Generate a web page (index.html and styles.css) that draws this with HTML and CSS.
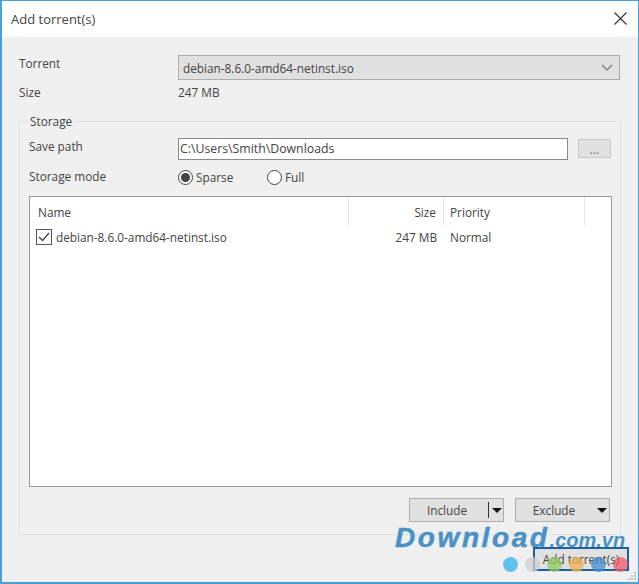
FILE: index.html
```html
<!DOCTYPE html>
<html lang="en">
<head>
<meta charset="utf-8">
<title>Add torrent(s)</title>
<link rel="stylesheet" href="styles.css">
</head>
<body>
<div class="window">
  <header class="titlebar">
    <span class="title">Add torrent(s)</span>
    <svg class="close" width="13" height="13" viewBox="0 0 13 13"><path d="M.5.5l12 12M12.500.5l-12 12" stroke="#333" stroke-width="1.100" fill="none"/></svg>
  </header>
  <main class="content">
    <div class="row row-torrent">
      <span class="label label-top">Torrent</span>
      <div class="combo">
        <span>debian-8.6.0-amd64-netinst.iso</span>
        <svg width="12" height="7" viewBox="0 0 12 7"><path d="M1 1l5 5 5-5" stroke="#777" stroke-width="1.200" fill="none"/></svg>
      </div>
    </div>
    <div class="row row-size">
      <span class="label">Size</span>
      <span>247 MB</span>
    </div>
    <fieldset class="group">
      <legend>Storage</legend>
      <div class="row row-path">
        <span class="label-inner label-top">Save path</span>
        <div class="input">C:\Users\Smith\Downloads</div>
        <div class="browse">...</div>
      </div>
      <div class="row row-mode">
        <span class="label-inner">Storage mode</span>
        <span class="radio radio-on"></span><span class="radio-text">Sparse</span>
        <span class="radio"></span><span class="radio-text">Full</span>
      </div>
      <div class="list">
        <div class="list-head">
          <span class="col-name">Name</span>
          <span class="col-size">Size</span>
          <span class="col-prio">Priority</span>
          <span class="col-rest"></span>
        </div>
        <div class="list-row">
          <span class="col-name cell-name">
            <svg width="16" height="16" viewBox="0 0 16 16"><rect x=".5" y=".5" width="15" height="15" fill="#fff" stroke="#555"/><path d="M3 8l3.500 3.500L13 4" stroke="#444" stroke-width="1.300" fill="none"/></svg>
            debian-8.6.0-amd64-netinst.iso
          </span>
          <span class="col-size cell">247 MB</span>
          <span class="col-prio cell">Normal</span>
        </div>
      </div>
      <div class="actions">
        <div class="btn btn-include"><span class="btn-text">Include</span><span class="sep"></span><span class="arrow"></span></div>
        <div class="btn btn-exclude"><span class="btn-text">Exclude</span><span class="arrow"></span></div>
      </div>
    </fieldset>
    <div class="footer">
      <div class="btn-add">Add torrent(s)</div>
    </div>
  </main>
  <div class="watermark">
    <div class="wm-text"><span class="wm-big">Download</span><span class="wm-small">.com.vn</span></div>
    <div class="dots">
      <span class="dot dot-sky"></span><span class="dot dot-gray"></span><span class="dot dot-green"></span><span class="dot dot-orange"></span><span class="dot dot-blue"></span><span class="dot dot-red"></span>
    </div>
  </div>
  <svg class="grip" width="10" height="10" viewBox="0 0 10 10"><path d="M7 1h2v2H7zM4 4h2v2H4zM7 4h2v2H7zM1 7h2v2H1zM4 7h2v2H4zM7 7h2v2H7z" fill="#c4c4c4"/></svg>
</div>
</body>
</html>
```
FILE: styles.css
```css
* { box-sizing: border-box; }
html, body { margin: 0; padding: 0; }
body {
  width: 639px;
  height: 584px;
  overflow: hidden;
  font-family: "Open Sans", "Noto Sans", sans-serif;
  font-size: 11.8px;
  color: #444;
}
.window {
  position: relative;
  width: 639px;
  height: 584px;
  border: 2px solid #4a9fd8;
  border-bottom-width: 2px;
  border-top-width: 1px;
  border-right-width: 1px;
  display: flex;
  flex-direction: column;
  background: #f0f0f0;
}
.titlebar {
  height: 36px;
  flex: none;
  background: #fff;
  display: flex;
  align-items: center;
  justify-content: space-between;
  padding: 0 11px 0 9px;
}
.title { font-size: 13px; color: #444; }
.close { margin-top: -1px; }
.content {
  flex: 1;
  display: flex;
  flex-direction: column;
  padding: 18px 18px 0 17px;
}
.row { display: flex; align-items: center; }
.label { width: 159px; flex: none; }
.label-top { align-self: flex-start; }
.row-torrent { height: 25px; }
.combo {
  flex: 1;
  height: 25px;
  display: flex;
  align-items: center;
  justify-content: space-between;
  padding: 0 4px;
  background: #e1e1e1;
  border: 1px solid #adadad;
}
.combo svg { margin-right: 2px; }
.row-size { height: 24px; }
.group {
  margin: 9px 0 0;
  padding: 0 7px 0 9px;
  width: 602px;
  height: 422px;
  border: 1px solid #e2e2e2;
  min-width: 0;
}
.group legend {
  padding: 0 2px;
  margin-left: -1px;
  line-height: 17px;
}
.label-inner { width: 149px; flex: none; }
.row-path { height: 25px; margin-top: 6px; gap: 0; }
.row-path .label-top { margin-top: 2px; }
.input {
  width: 390px;
  height: 22px;
  background: #fff;
  border: 1px solid #8a8a8a;
  padding: 0 1px;
  line-height: 20px;
  font-size: 12.300px;
}
.browse {
  margin-left: 10px;
  width: 33px;
  height: 19px;
  background: #e1e1e1;
  border: 1px solid #c8c8c8;
  color: #777;
  text-align: center;
  line-height: 18px;
}
.row-mode { height: 26px; margin-top: 3px; }
.row-mode .label-inner { margin-top: -2px; }
.radio {
  width: 15px;
  height: 15px;
  border: 1px solid #444;
  border-radius: 50%;
  background: #fff;
  flex: none;
  display: flex;
  align-items: center;
  justify-content: center;
}
.radio-on::after {
  content: "";
  width: 9px;
  height: 9px;
  border-radius: 50%;
  background: #444;
}
.radio-text { margin-left: 3px; width: 71px; }
.radio-text:last-child { width: auto; }
.list {
  margin-top: 6px;
  height: 291px;
  width: 583px;
  background: #fff;
  border: 1px solid #9a9a9a;
  flex: none;
}
.list-head { display: flex; height: 28px; align-items: center; }
.list-head span {
  height: 100%;
  display: flex;
  align-items: center;
  padding-top: 2px;
  border-right: 1px solid #e6e6e6;
}
.col-name { width: 319px; padding-left: 8px; }
.col-size { width: 95px; justify-content: flex-end; padding-right: 7px; display: flex; }
.col-prio { width: 141px; padding-left: 6px; }
.col-rest { flex: 1; border-right: 0 !important; }
.list-row { display: flex; height: 24px; align-items: center; }
.cell-name { display: flex; align-items: center; padding-left: 6px; gap: 4px; }
.actions {
  display: flex;
  gap: 11px;
  justify-content: flex-end;
  padding-right: 3px;
  margin-top: 11px;
}
.btn {
  width: 95px;
  height: 24px;
  background: #e1e1e1;
  border: 1px solid #adadad;
  display: flex;
  align-items: center;
}
.btn-text { flex: 1; text-align: center; padding-right: 4px; }
.btn-exclude .btn-text { padding-right: 5px; }
.sep { width: 1px; height: 16px; background: #333; margin-right: 3px; }
.arrow {
  width: 0;
  height: 0;
  border-left: 5px solid transparent;
  border-right: 5px solid transparent;
  border-top: 5px solid #111;
  margin-right: 1px;
}
.btn-exclude .arrow { margin-right: 2px; }
.footer {
  display: flex;
  justify-content: flex-end;
  margin-top: 12px;
  margin-right: -9px;
}
.btn-add {
  width: 96px;
  height: 24px;
  background: #e1e1e1;
  border: 2px solid #1f5f9e;
  text-align: center;
  line-height: 20px;
}
.watermark {
  position: absolute;
  left: 393px;
  top: 527px;
  width: 240px;
  height: 50px;
  pointer-events: none;
}
.wm-text {
  display: flex;
  align-items: baseline;
  font-family: "Liberation Sans", sans-serif;
  font-weight: bold;
  font-style: italic;
  color: #4a92c6;
  line-height: 20px;
}
.wm-big { font-size: 28px; letter-spacing: 2.600px; -webkit-text-stroke: .5px #4a92c6; }
.wm-small { font-size: 20px; }
.dots {
  position: absolute;
  left: 108px;
  top: 29px;
  display: flex;
  gap: 7px;
}
.dot { width: 15px; height: 15px; border-radius: 50%; opacity: .75; }
.dot-sky { background: #4fbdec; opacity: .9; }
.dot-gray { background: #cfcfcf; }
.dot-green { background: #8ccb5e; }
.dot-orange { background: #f2b04c; }
.dot-blue { background: #3f8fd0; }
.dot-red { background: #ee5a6a; }
.grip { position: absolute; right: 1px; bottom: 1px; }
```
